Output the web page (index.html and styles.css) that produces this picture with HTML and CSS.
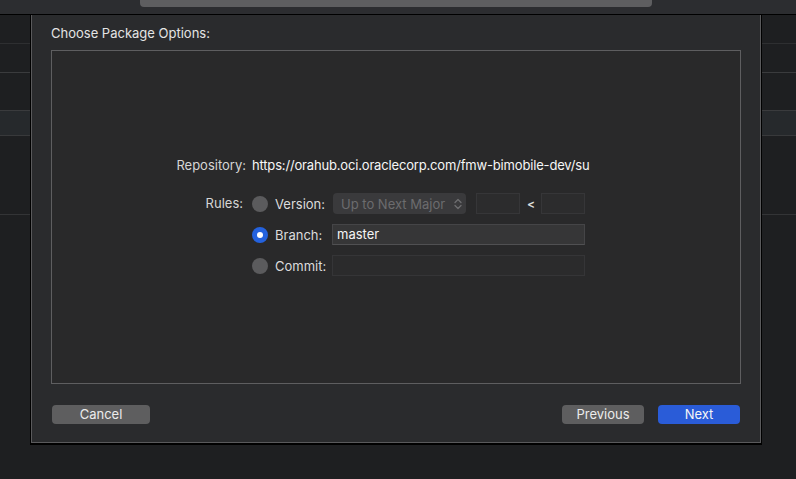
FILE: index.html
```html
<!DOCTYPE html>
<html>
<head>
<meta charset="utf-8">
<link rel="stylesheet" href="styles.css">
</head>
<body>
<div class="topbar"><div class="search"></div></div>
<div class="main">
  <div class="side side-left">
    <div class="srow r1"></div>
    <div class="srow r2"></div>
    <div class="srow r3"></div>
    <div class="srow hl"></div>
    <div class="srow r4"></div>
  </div>
  <div class="sheet">
    <div class="title">Choose Package Options:</div>
    <div class="box">
      <div class="form">
        <div class="row repo">
          <div class="lbl">Repository:</div>
          <div class="url">https://orahub.oci.oraclecorp.com/fmw-bimobile-dev/su</div>
        </div>
        <div class="row rules">
          <div class="lbl rules-lbl">Rules:</div>
          <div class="opts">
            <div class="opt">
              <span class="radio"></span>
              <span class="olbl">Version:</span>
              <div class="popup"><span>Up to Next Major</span>
                <svg class="chev" width="8" height="12" viewBox="0 0 8 12"><path d="M1 4.5 L4 1.5 L7 4.5 M1 7.5 L4 10.5 L7 7.5" fill="none" stroke="#6e6e70" stroke-width="1.3" stroke-linecap="round" stroke-linejoin="round"/></svg>
              </div>
              <div class="field small"></div>
              <span class="lt">&lt;</span>
              <div class="field small"></div>
            </div>
            <div class="opt">
              <span class="radio on"></span>
              <span class="olbl">Branch:</span>
              <div class="field wide active">master</div>
            </div>
            <div class="opt">
              <span class="radio"></span>
              <span class="olbl">Commit:</span>
              <div class="field wide disabled"></div>
            </div>
          </div>
        </div>
      </div>
    </div>
    <div class="buttons">
      <div class="btn">Cancel</div>
      <div class="spacer"></div>
      <div class="btn prev">Previous</div>
      <div class="btn next">Next</div>
    </div>
  </div>
  <div class="side side-right">
    <div class="srow r1"></div>
    <div class="srow r2"></div>
    <div class="srow r3"></div>
    <div class="srow hl"></div>
    <div class="srow r4"></div>
  </div>
</div>
</body>
</html>
```
FILE: styles.css
```css
html, body {
  margin: 0;
  padding: 0;
}
body {
  width: 796px;
  height: 479px;
  overflow: hidden;
  background: #1e1f21;
  font-family: Inter, "Noto Sans", "Liberation Sans", sans-serif;
  font-size: 13px;
  color: #e2e2e2;
}
.topbar {
  height: 14px;
  background: #2c2d30;
  border-bottom: 1px solid #000;
}
.search {
  margin-left: 140px;
  width: 512px;
  height: 7px;
  background: #5e5e60;
  border-radius: 0 0 4px 4px;
}
.main {
  display: flex;
  height: 464px;
}
.side {
  display: flex;
  flex-direction: column;
}
.side-left { width: 30px; }
.side-right { flex: 1; }
.srow { box-sizing: border-box; }
.r1 { height: 29px; border-bottom: 1px solid #2e2f31; }
.r2 { height: 29px; border-bottom: 1px solid #3a3b3d; }
.r3 { height: 38px; border-bottom: 1px solid #3a3b3d; }
.hl { height: 25px; background: #26292c; border-bottom: 1px solid #38393b; }
.r4 { height: 79px; border-bottom: 1px solid #333436; }

.sheet {
  width: 732px;
  height: 430px;
  box-sizing: border-box;
  border: 1px solid #000;
  border-top: none;
  border-bottom-width: 2px;
  background: #2a2b2d;
  box-shadow: inset 1px 0 #5a5a5c, inset -1px 0 #5a5a5c, inset 0 -1px #5a5a5c;
  padding: 10px 20px 0 20px;
  display: flex;
  flex-direction: column;
}
.title {
  height: 16px;
  line-height: 16px;
  color: #e4e4e4;
}
.box {
  margin-top: 9px;
  height: 334px;
  box-sizing: border-box;
  border: 1px solid #5e5e60;
  background: #29292a;
  padding-top: 104px;
}
.form {
  margin-left: 108px;
  display: flex;
  flex-direction: column;
  gap: 17px;
}
.row {
  display: flex;
}
.lbl {
  width: 86px;
  text-align: right;
  height: 21px;
  line-height: 21px;
  color: #d6d6d6;
  flex-shrink: 0;
}
.rules-lbl { padding-right: 3px; width: 83px; }
.url {
  margin-left: 6px;
  white-space: nowrap;
  letter-spacing: -0.17px;
  height: 21px;
  line-height: 21px;
  color: #f6f6f6;
}
.opts {
  margin-left: 6px;
  display: flex;
  flex-direction: column;
  gap: 10px;
}
.opt {
  display: flex;
  align-items: center;
  height: 21px;
}
.radio {
  width: 16px;
  height: 16px;
  border-radius: 50%;
  background: #5b5b5d;
  box-sizing: border-box;
  flex-shrink: 0;
  display: flex;
  align-items: center;
  justify-content: center;
}
.radio.on {
  background: #2462de;
}
.radio.on::after {
  content: "";
  width: 6px;
  height: 6px;
  border-radius: 50%;
  background: #fff;
}
.olbl {
  margin-left: 7px;
  width: 57px;
  color: #dcdcdc;
  flex-shrink: 0;
}
.popup {
  margin-left: 1px;
  width: 133px;
  height: 21px;
  box-sizing: border-box;
  background: #3a3a3c;
  border-radius: 4px;
  display: flex;
  align-items: center;
  justify-content: space-between;
  padding: 0 4px 0 8px;
  color: #6c6c6e;
}
.field {
  height: 21px;
  box-sizing: border-box;
  border: 1px solid #363638;
  background: #2c2c2d;
  line-height: 19px;
  padding: 0 4px;
  color: #f4f4f4;
}
.field.small {
  width: 44px;
  margin-left: 10px;
}
.lt {
  margin-left: 7px;
  width: 10px;
  color: #dcdcdc;
  font-size: 12px;
  font-weight: 600;
}
.field.small + .lt + .field.small { margin-left: 4px; }
.field.wide { width: 253px; }
.field.active {
  background: #363637;
  border-color: #454547;
  border-bottom-color: #505052;
}
.field.disabled {
  background: #2b2b2c;
  border-color: #353537;
}
.buttons {
  margin-top: 21px;
  display: flex;
  align-items: center;
  padding: 0 1px 0 1px;
}
.spacer { flex: 1; }
.btn {
  height: 19px;
  line-height: 19px;
  border-radius: 4px;
  background: #5e5e5f;
  color: #ececec;
  text-align: center;
  width: 98px;
}
.btn.prev { width: 82px; }
.btn.next { width: 82px; margin-left: 14px; background: #2a5cd8; color: #f6f6f6; }
```
